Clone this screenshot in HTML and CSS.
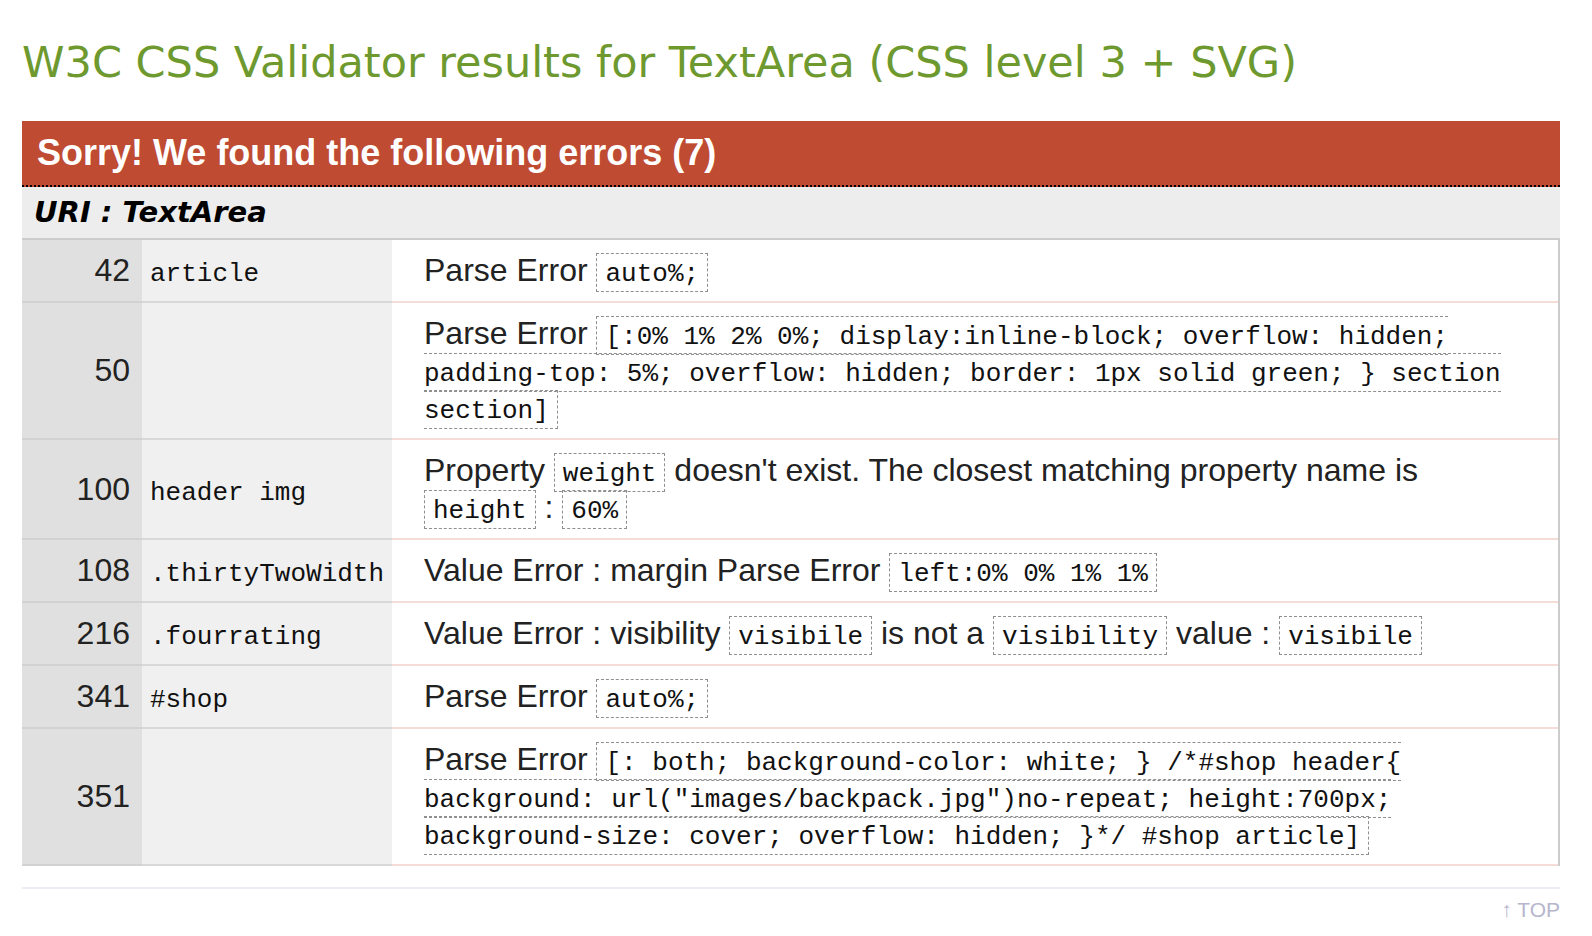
FILE: index.html
```html
<!DOCTYPE html>
<html lang="en">
<head>
<meta charset="utf-8">
<title>W3C CSS Validator results for TextArea (CSS level 3 + SVG)</title>
<link rel="stylesheet" href="styles.css">
</head>
<body>
<div class="page">
  <h2 class="title">W3C CSS Validator results for TextArea (CSS level 3 + SVG)</h2>
  <div class="errors">
    <h3 class="errors-head">Sorry! We found the following errors (7)</h3>
    <h4 class="uri">URI : TextArea</h4>
    <table class="error-table">
      <colgroup><col class="c-num"><col class="c-sel"><col class="c-msg"></colgroup>
      <tr>
        <td class="num">42</td>
        <td class="sel"><span class="sel-text">article</span></td>
        <td class="msg">Parse Error <span class="code">auto%;</span></td>
      </tr>
      <tr>
        <td class="num">50</td>
        <td class="sel"></td>
        <td class="msg">Parse Error <span class="code">[:0% 1% 2% 0%; display:inline-block; overflow: hidden; padding-top: 5%; overflow: hidden; border: 1px solid green; } section section]</span></td>
      </tr>
      <tr>
        <td class="num">100</td>
        <td class="sel"><span class="sel-text">header img</span></td>
        <td class="msg">Property <span class="code">weight</span> doesn't exist. The closest matching property name is <span class="code">height</span> : <span class="code">60%</span></td>
      </tr>
      <tr>
        <td class="num">108</td>
        <td class="sel"><span class="sel-text">.thirtyTwoWidth</span></td>
        <td class="msg">Value Error : margin Parse Error <span class="code">left:0% 0% 1% 1%</span></td>
      </tr>
      <tr>
        <td class="num">216</td>
        <td class="sel"><span class="sel-text">.fourrating</span></td>
        <td class="msg">Value Error : visibility <span class="code">visibile</span> is not a <span class="code">visibility</span> value : <span class="code">visibile</span></td>
      </tr>
      <tr>
        <td class="num">341</td>
        <td class="sel"><span class="sel-text">#shop</span></td>
        <td class="msg">Parse Error <span class="code">auto%;</span></td>
      </tr>
      <tr>
        <td class="num">351</td>
        <td class="sel"></td>
        <td class="msg">Parse Error <span class="code">[: both; background-color: white; } /*#shop header{ background: url("images/backpack.jpg")no-repeat; height:700px; background-size: cover; overflow: hidden; }*/ #shop article]</span></td>
      </tr>
    </table>
  </div>
  <div class="footer">
    <a class="top" href="#">&#8593; TOP</a>
  </div>
</div>
</body>
</html>
```
FILE: styles.css
```css
html, body {
  margin: 0;
  padding: 0;
  background: #ffffff;
}

.page {
  margin-left: 22px;
  width: 1538px;
  font-family: "Liberation Sans", Arial, sans-serif;
  color: #222222;
}

.title {
  margin: 0 0 33px 0;
  padding-top: 36px;
  font-family: "DejaVu Sans", Verdana, sans-serif;
  font-weight: normal;
  font-size: 43px;
  line-height: 52px;
  color: #6e992e;
  white-space: nowrap;
}

.errors-head {
  margin: 0;
  height: 64px;
  padding-left: 15px;
  background: #bf4b32;
  color: #ffffff;
  font-family: "Liberation Sans", Arial, sans-serif;
  font-weight: bold;
  font-size: 36px;
  line-height: 64px;
  border-bottom: 2px dotted #000000;
}

.uri {
  margin: 0;
  height: 51px;
  padding-left: 12px;
  background: #ededed;
  font-family: "DejaVu Sans", Verdana, sans-serif;
  font-weight: bold;
  font-style: italic;
  font-size: 29px;
  line-height: 51px;
  color: #000000;
}

.error-table {
  width: 1538px;
  table-layout: fixed;
  border-collapse: separate;
  border-spacing: 0;
  border-top: 2px solid #cccccc;
  border-right: 2px solid #cccccc;
}

.c-num { width: 120px; }
.c-sel { width: 250px; }

.error-table td {
  vertical-align: middle;
  padding: 12px 0;
  line-height: 37px;
  font-size: 32px;
}

.num {
  background: #e0e0e0;
  border-bottom: 2px solid #d2d2d2;
  text-align: right;
  padding-right: 12px !important;
  color: #222222;
}

.sel {
  background: #f0f0f0;
  border-bottom: 2px solid #d8d8d8;
  padding-left: 8px !important;
}

.sel-text {
  font-family: "Liberation Mono", "Courier New", monospace;
  font-size: 26px;
  line-height: 26px;
  color: #111111;
  white-space: nowrap;
}

.msg {
  background: #ffffff;
  border-bottom: 2px solid #f6dcd7;
  padding-left: 32px !important;
  padding-right: 38px !important;
  color: #222222;
}

.code {
  font-family: "Liberation Mono", "Courier New", monospace;
  font-size: 26px;
  line-height: 26px;
  color: #111111;
  border: 1px dashed #8f8f8f;
  padding: 5px 8px 2px;
}

.footer {
  margin-top: 21px;
  border-top: 2px solid #ececf8;
  text-align: right;
  padding-top: 8px;
}

.top {
  font-size: 21px;
  line-height: 26px;
  color: #b6b6cc;
  text-decoration: none;
}
```
